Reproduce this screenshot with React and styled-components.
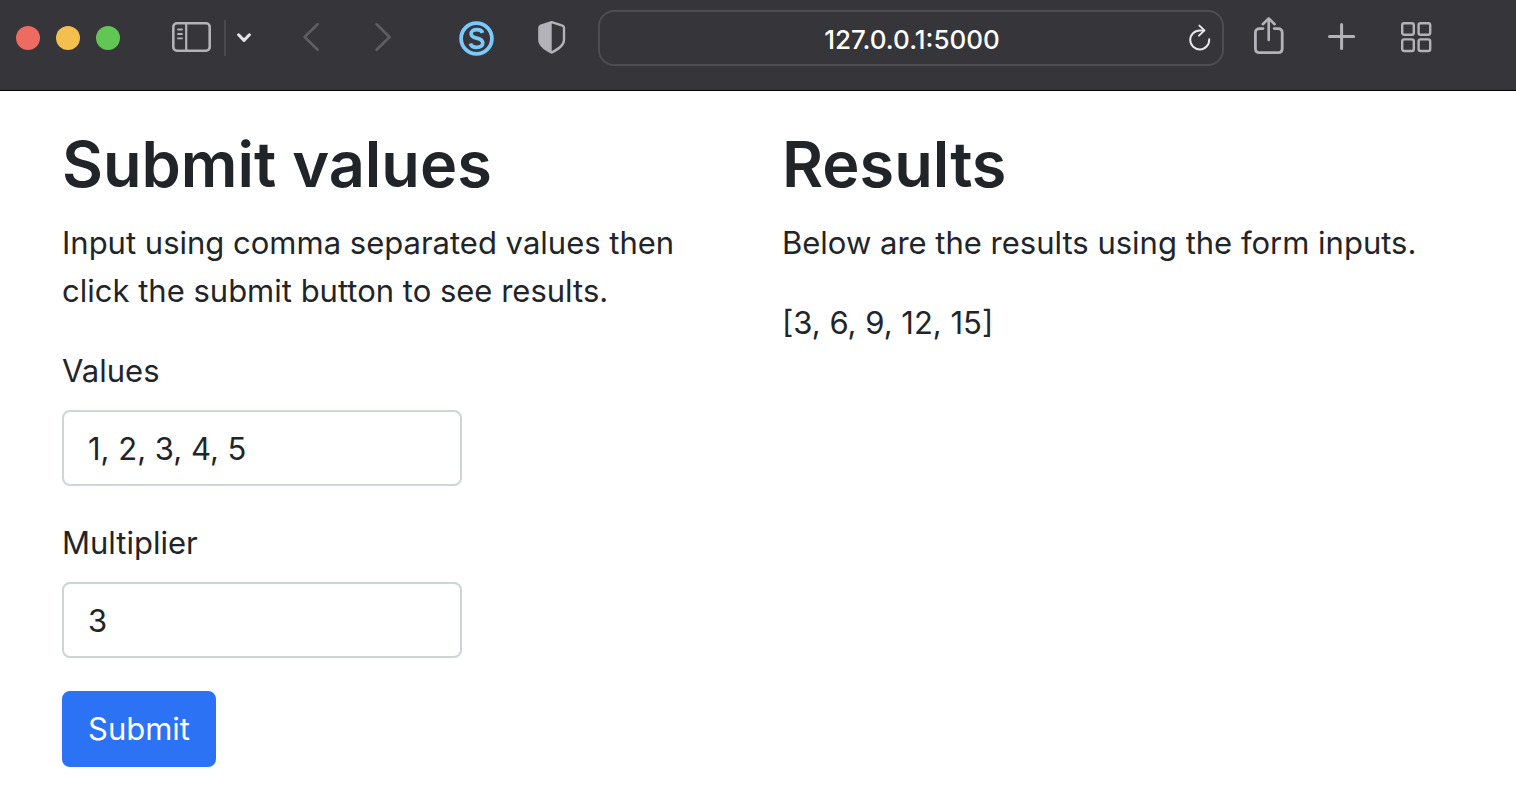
import React, { useState } from "react";
import styled, { createGlobalStyle } from "styled-components";

const GlobalStyle = createGlobalStyle`
  *, *::before, *::after { box-sizing: border-box; }
  body {
    margin: 0;
    background: #fff;
    color: #212529;
    font-family: Inter, "Liberation Sans", sans-serif;
    font-size: 31px;
    line-height: 48px;
  }
`;

const Toolbar = styled.header`
  display: flex;
  align-items: center;
  padding: 10px 84px 24px 16px;
  background: #363539;
  box-shadow: 0 1px 0 #000;
`;

const Group = styled.div`
  display: flex;
  align-items: center;
  gap: ${(p) => p.$gap}px;
  margin-right: ${(p) => p.$after || 0}px;
`;

const WindowDot = styled.button`
  width: 24px;
  height: 24px;
  padding: 0;
  border: 0;
  border-radius: 50%;
  background: ${(p) => p.$color};
`;

const IconButton = styled.button`
  display: block;
  height: 56px;
  padding: 0;
  border: 0;
  background: none;
  color: ${(p) => p.$color || "#b3b2b8"};

  svg {
    display: block;
    fill: none;
    stroke: currentColor;
    stroke-linecap: round;
    stroke-linejoin: round;
  }
`;

const Divider = styled.span`
  width: 2px;
  height: 36px;
  background: #4a494d;
`;

const AddressBar = styled.div`
  flex: 1;
  min-width: 0;
  display: flex;
  align-items: center;
  height: 56px;
  margin: 0 30px 0 32px;
  padding: 0 11px 0 35px;
  border: 2px solid #4e4d51;
  border-radius: 16px;
`;

const AddressInput = styled.input`
  flex: 1;
  min-width: 0;
  padding: 4px 0 0;
  border: 0;
  outline: 0;
  background: none;
  color: #fff;
  font: 500 26px/32px Inter, "Liberation Sans", sans-serif;
  text-align: center;
`;

const Container = styled.main`
  display: grid;
  grid-template-columns: 1fr 1fr;
  max-width: 1440px;
  margin: 0 auto;
  padding: 32px 0;
`;

const Column = styled.section`
  min-width: 0;
  padding: 0 24px;
`;

const Heading = styled.h1`
  margin: 0 0 13px;
  font-size: 63px;
  font-weight: 600;
  line-height: 84px;
`;

const Paragraph = styled.p`
  margin: 0 0 32px;
`;

const Label = styled.label`
  display: block;
  margin-bottom: 15px;
`;

const TextInput = styled.input`
  display: block;
  width: 400px;
  max-width: 100%;
  height: 76px;
  margin-bottom: 33px;
  padding: 12px 24px;
  border: 2px solid #ced4da;
  border-radius: 8px;
  outline: 0;
  background: #fff;
  color: inherit;
  font: inherit;
`;

const SubmitButton = styled.button`
  display: block;
  padding: 12px 24px;
  border: 2px solid #2b72f5;
  border-radius: 8px;
  background: #2b72f5;
  color: #fff;
  font: inherit;
`;

function Icon({ width, strokeWidth = 3, children }) {
  return (
    <svg width={width} height="56" viewBox={`0 0 ${width} 56`} strokeWidth={strokeWidth} aria-hidden="true">
      {children}
    </svg>
  );
}

function BrowserToolbar() {
  const [address, setAddress] = useState("127.0.0.1:5000");
  return (
    <Toolbar>
      <Group $gap={16} $after={52}>
        <WindowDot $color="#ed6b60" aria-label="Close window" />
        <WindowDot $color="#f5bf4f" aria-label="Minimize window" />
        <WindowDot $color="#62c655" aria-label="Zoom window" />
      </Group>
      <Group $gap={11} $after={52}>
        <Group $gap={13}>
          <IconButton aria-label="Show sidebar">
            <Icon width={39} strokeWidth={2.6}>
              <rect x="1.3" y="13.3" width="36.4" height="27.4" rx="3.6" />
              <path d="M14.2 13.5V40.5" strokeWidth="2.2" />
              <path d="M6 19.5H10M6 24H10M6 28.4H10" strokeWidth="1.8" />
            </Icon>
          </IconButton>
          <Divider />
        </Group>
        <IconButton $color="#e4e3e8" aria-label="Tab groups">
          <Icon width={14} strokeWidth={3}>
            <path d="M1.6 24.8L7 30.4L12.4 24.8" />
          </Icon>
        </IconButton>
      </Group>
      <Group $gap={56} $after={68}>
        <IconButton $color="#5f5e63" aria-label="Back">
          <Icon width={16} strokeWidth={2.6}>
            <path d="M14.6 14.2L1.6 27L14.6 39.8" />
          </Icon>
        </IconButton>
        <IconButton $color="#5f5e63" aria-label="Forward">
          <Icon width={16} strokeWidth={2.6}>
            <path d="M1.6 14.2L14.6 27L1.6 39.8" />
          </Icon>
        </IconButton>
      </Group>
      <Group $gap={44}>
        <IconButton $color="#7bcafd" aria-label="S extension">
          <Icon width={35} strokeWidth={3.8}>
            <circle cx="17.5" cy="28.5" r="15.4" />
            <path
              d="M23.6 22.8C22.8 20.5 20.6 19.6 17.8 19.6C14.4 19.6 12.1 21.2 12.1 23.7C12.1 26.2 14.2 27.3 17.7 28.1C21.5 29 23.8 30.2 23.8 33C23.8 35.7 21.2 37.3 17.8 37.3C14.4 37.3 12 36 11.4 33.5"
              strokeWidth="3.7"
              strokeLinecap="butt"
            />
          </Icon>
        </IconButton>
        <IconButton aria-label="Privacy report">
          <Icon width={28} strokeWidth={2.4}>
            <path d="M13.7 12.2L24.5 15.6Q26 16.1 26 17.8V30C26 35.6 20 39 13.7 42.6C7.4 39 1.4 35.6 1.4 30V17.8Q1.4 16.1 2.9 15.6Z" />
            <path d="M13.7 12.2V42.6C7.4 39 1.4 35.6 1.4 30V17.8Q1.4 16.1 2.9 15.6Z" fill="currentColor" stroke="none" />
          </Icon>
        </IconButton>
      </Group>
      <AddressBar>
        <AddressInput aria-label="Address" value={address} onChange={(e) => setAddress(e.target.value)} />
        <IconButton $color="#e6e5e9" aria-label="Reload page">
          <Icon width={22} strokeWidth={2}>
            <path d="M20.2 29.3A9.5 9.5 0 1 1 10.8 20.4H15.2" />
            <path d="M10.4 15.6L15.4 20.4L10 25.6" />
          </Icon>
        </IconButton>
      </AddressBar>
      <Group $gap={44}>
        <IconButton aria-label="Share">
          <Icon width={30} strokeWidth={2.8}>
            <path d="M9 18.6H5.6Q1.4 18.6 1.4 22.8V38.4Q1.4 42.6 5.6 42.6H24Q28.2 42.6 28.2 38.4V22.8Q28.2 18.6 24 18.6H20.2" />
            <path d="M14.7 30V8.6M8.8 14.2L14.7 8.4L20.6 14.2" strokeWidth="2.6" />
          </Icon>
        </IconButton>
        <IconButton aria-label="New tab">
          <Icon width={28} strokeWidth={3}>
            <path d="M13.6 14.4V38.6M1.5 26.5H25.7" />
          </Icon>
        </IconButton>
        <IconButton aria-label="Tab overview">
          <Icon width={32} strokeWidth={2.4}>
            <rect x="2.2" y="13.2" width="11.6" height="11.6" rx="2" />
            <rect x="18.6" y="13.2" width="11.6" height="11.6" rx="2" />
            <rect x="2.2" y="29.4" width="11.6" height="11.6" rx="2" />
            <rect x="18.6" y="29.4" width="11.6" height="11.6" rx="2" />
          </Icon>
        </IconButton>
      </Group>
    </Toolbar>
  );
}

export default function App() {
  const [values, setValues] = useState("1, 2, 3, 4, 5");
  const [multiplier, setMultiplier] = useState("3");
  const [results, setResults] = useState([3, 6, 9, 12, 15]);

  const submit = (event) => {
    event.preventDefault();
    setResults(values.split(",").map((v) => Number(v) * Number(multiplier)));
  };

  return (
    <>
      <GlobalStyle />
      <BrowserToolbar />
      <Container>
        <Column>
          <Heading>Submit values</Heading>
          <Paragraph>Input using comma separated values then click the submit button to see results.</Paragraph>
          <form onSubmit={submit}>
            <Label htmlFor="values">Values</Label>
            <TextInput id="values" value={values} onChange={(e) => setValues(e.target.value)} />
            <Label htmlFor="multiplier">Multiplier</Label>
            <TextInput id="multiplier" value={multiplier} onChange={(e) => setMultiplier(e.target.value)} />
            <SubmitButton type="submit">Submit</SubmitButton>
          </form>
        </Column>
        <Column>
          <Heading as="h2">Results</Heading>
          <Paragraph>Below are the results using the form inputs.</Paragraph>
          <Paragraph>[{results.join(", ")}]</Paragraph>
        </Column>
      </Container>
    </>
  );
}
